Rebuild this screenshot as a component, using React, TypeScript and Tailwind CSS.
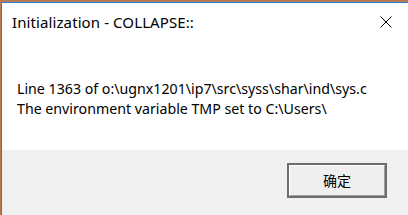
export default function App() {
  return (
    <div className="w-[408px] h-[215px] overflow-hidden bg-[#b97a52] pt-[2px] pl-[1px]">
      <div className="h-full border-t border-l border-[#2a7fd4] bg-white flex flex-col font-['Noto_Sans','Open_Sans',sans-serif]">
        {/* Title bar */}
        <div className="h-[37px] flex items-center justify-between pl-[10px] pr-[16px]">
          <span className="text-[15px] leading-none text-black pt-[2px] tracking-[0.1px]">Initialization - COLLAPSE::</span>
          <svg width="12" height="12" viewBox="0 0 12 12" className="mt-[1px]">
            <path d="M0.5 0.5 L11.5 11.5 M11.5 0.5 L0.5 11.5" stroke="#000" strokeWidth="1" />
          </svg>
        </div>

        {/* Message */}
        <div className="h-[110px] pl-[15px] pt-[39px] text-[14.2px] leading-[20px] text-black">
          <p>Line 1363 of o:\ugnx1201\ip7\src\syss\shar\ind\sys.c</p>
          <p>The environment variable TMP set to C:\Users\</p>
        </div>

        {/* Footer */}
        <div className="flex-1 bg-[#f0f0f0] flex justify-end pr-[21px] pt-[13px]">
          <button className="w-[100px] h-[35px] border-2 border-[#6c6c6c] bg-[#e1e1e1] p-0">
            <div className="w-full h-full border border-t-white border-l-white border-r-[#a0a0a0] border-b-[#a0a0a0] bg-[#efefef] flex items-center justify-center text-[14px] text-black font-['Noto_Sans_CJK_SC',sans-serif]">
              确定
            </div>
          </button>
        </div>
      </div>
    </div>
  );
}
